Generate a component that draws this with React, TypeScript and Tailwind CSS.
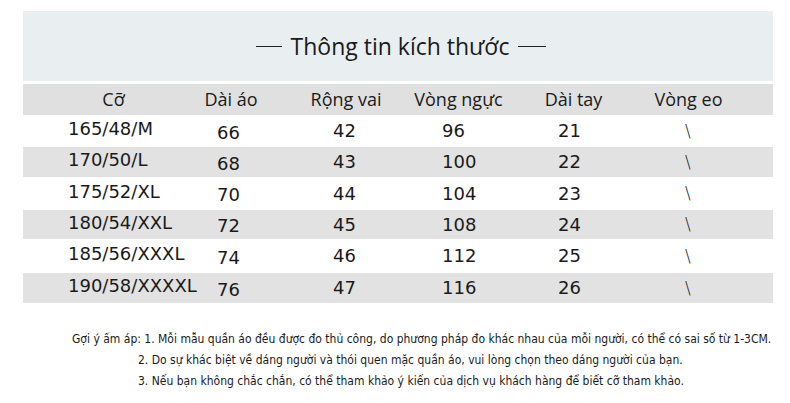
const headers = ["Cỡ", "Dài áo", "Rộng vai", "Vòng ngực", "Dài tay", "Vòng eo"];

const rows = [
  ["165/48/M", "66", "42", "96", "21", "\\"],
  ["170/50/L", "68", "43", "100", "22", "\\"],
  ["175/52/XL", "70", "44", "104", "23", "\\"],
  ["180/54/XXL", "72", "45", "108", "24", "\\"],
  ["185/56/XXXL", "74", "46", "112", "25", "\\"],
  ["190/58/XXXXL", "76", "47", "116", "26", "\\"],
];

const rowHeights = ["h-[32px]", "h-[30px]", "h-[33px]", "h-[29px]", "h-[34px]", "h-[30px]"];

export default function App() {
  return (
    <main className="h-[403px] w-[790px] bg-white pt-[11px] text-[#1a1a1a]">
      <div className="mx-[23px] w-[750px]">
        {/* title */}
        <div className="flex h-[70px] items-center justify-center gap-[9px] bg-[#e9eef0] pl-[6px]">
          <span className="h-px w-[26px] bg-[#222]" />
          <h1 className="text-[23px] leading-none font-['Open_Sans',sans-serif]">Thông tin kích thước</h1>
          <span className="h-px w-[28px] bg-[#222]" />
        </div>

        {/* header */}
        <div className="mt-[3px] grid h-[31px] grid-cols-[repeat(6,115px)] items-center bg-[#e0e0e0] pl-[33px] text-[18px] font-['Open_Sans',sans-serif]">
          {headers.map((h, i) => (
            <div key={h} className={"text-center " + (i === 1 || i === 2 ? "pl-[5px]" : "")}>{h}</div>
          ))}
        </div>

        {/* data rows */}
        <div className="font-['DejaVu_Sans',sans-serif] text-[18px] leading-none">
          {rows.map((r, i) => (
            <div
              key={r[0]}
              className={
                "grid grid-cols-[149px_115px_110px_116px_127px_1fr] items-center pl-[45px] " +
                rowHeights[i] + " " + (i % 2 === 1 ? "bg-[#e2e2e2]" : "")
              }
            >
              <div className="pb-[4px]">{r[0]}</div>
              <div className="pt-[3px]">{r[1]}</div>
              <div className="pl-[1px]">{r[2]}</div>
              <div>{r[3]}</div>
              <div>{r[4]}</div>
              <div className="font-['DejaVu_Sans_Light',sans-serif] text-[17px]">{r[5]}</div>
            </div>
          ))}
        </div>
      </div>

      {/* notes */}
      <div className="mt-[26px] pl-[72px] text-[12px] leading-[21px] font-['DejaVu_Sans_Condensed','DejaVu_Sans',sans-serif]">
        <p>Gợi ý ấm áp: 1. Mỗi mẫu quần áo đều được đo thủ công, do phương pháp đo khác nhau của mỗi người, có thể có sai số từ 1-3CM.</p>
        <p className="pl-[66px]">2. Do sự khác biệt về dáng người và thói quen mặc quần áo, vui lòng chọn theo dáng người của bạn.</p>
        <p className="pl-[66px]">3. Nếu bạn không chắc chắn, có thể tham khảo ý kiến của dịch vụ khách hàng để biết cỡ tham khảo.</p>
      </div>
    </main>
  );
}
